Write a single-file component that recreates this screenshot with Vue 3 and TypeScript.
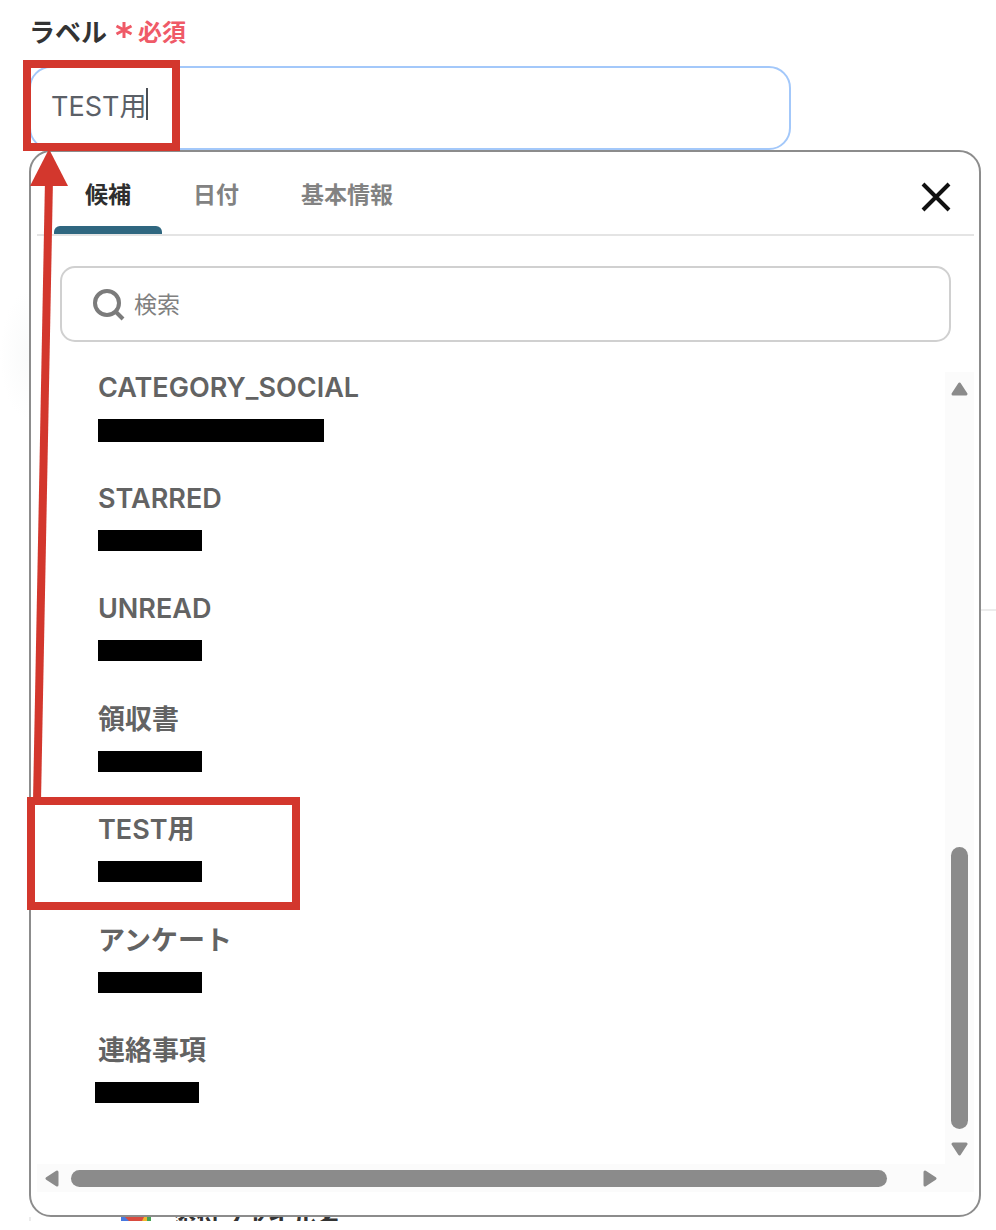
<script setup lang="ts">
import { ref } from 'vue'

interface Candidate {
  name: string
  size: 'wide' | 'normal'
  marked?: boolean
  shifted?: boolean
}

const label = ref('TEST用')
const keyword = ref('')
const activeTab = ref('候補')
const tabs: string[] = ['候補', '日付', '基本情報']

const candidates: Candidate[] = [
  { name: 'CATEGORY_SOCIAL', size: 'wide' },
  { name: 'STARRED', size: 'normal' },
  { name: 'UNREAD', size: 'normal' },
  { name: '領収書', size: 'normal' },
  { name: 'TEST用', size: 'normal', marked: true },
  { name: 'アンケート', size: 'normal' },
  { name: '連絡事項', size: 'normal', shifted: true },
]
</script>

<template>
  <main class="page">
    <span class="glow" aria-hidden="true"></span>
    <div class="label-row">
      <label for="label-input">ラベル</label>
      <span class="required">
        <svg viewBox="0 0 18 18" width="18" height="18" aria-hidden="true">
          <path d="M9 1v16M1.5 5l15 8M16.5 5l-15 8" fill="none" stroke="#ef5a67" stroke-width="3" />
        </svg>
        必須
      </span>
    </div>

    <div class="field">
      <div class="field-box">
        <input id="label-input" v-model="label" type="text" autocomplete="off" />
        <span class="caret" aria-hidden="true"></span>
      </div>
      <span class="mark mark-field" aria-hidden="true"></span>
    </div>

    <section class="popup">
      <header class="head">
        <nav class="tabs" role="tablist">
          <button
            v-for="tab in tabs"
            :key="tab"
            type="button"
            role="tab"
            class="tab"
            :class="{ active: tab === activeTab }"
            :aria-selected="tab === activeTab"
            @click="activeTab = tab"
          >
            {{ tab }}
          </button>
        </nav>
        <button type="button" class="close" aria-label="閉じる">
          <svg viewBox="0 0 30 30" width="30" height="30" aria-hidden="true">
            <path d="M2 2l26 26M28 2L2 28" fill="none" stroke="#111" stroke-width="4" />
          </svg>
        </button>
      </header>

      <div class="search">
        <svg viewBox="0 0 32 32" width="32" height="32" aria-hidden="true">
          <circle cx="14" cy="14" r="12" fill="none" stroke="#7b7b7b" stroke-width="4" />
          <path d="M22.500 22.500L30 30" fill="none" stroke="#7b7b7b" stroke-width="4" />
        </svg>
        <input v-model="keyword" type="text" placeholder="検索" aria-label="検索" />
      </div>

      <div class="scroller">
        <ul class="list">
          <li v-for="item in candidates" :key="item.name" class="item">
            <button type="button" class="choice">
              <span class="name">{{ item.name }}</span>
              <span class="masked" :class="[item.size, { shifted: item.shifted }]"></span>
            </button>
            <span v-if="item.marked" class="mark mark-item" aria-hidden="true"></span>
          </li>
        </ul>
        <div class="rail vertical" aria-hidden="true">
          <svg viewBox="0 0 17 14" width="17" height="14">
            <path d="M8.500 2L15 12H2z" fill="#8b8b8b" stroke="#8b8b8b" stroke-width="3" stroke-linejoin="round" />
          </svg>
          <span class="space"></span>
          <span class="thumb"></span>
          <svg viewBox="0 0 17 14" width="17" height="14">
            <path d="M8.500 12L15 2H2z" fill="#8b8b8b" stroke="#8b8b8b" stroke-width="3" stroke-linejoin="round" />
          </svg>
        </div>
        <div class="rail horizontal" aria-hidden="true">
          <svg viewBox="0 0 14 17" width="14" height="17">
            <path d="M2 8.500L12 2V15z" fill="#8b8b8b" stroke="#8b8b8b" stroke-width="3" stroke-linejoin="round" />
          </svg>
          <span class="thumb"></span>
          <svg viewBox="0 0 14 17" width="14" height="17">
            <path d="M12 8.500L2 2V15z" fill="#8b8b8b" stroke="#8b8b8b" stroke-width="3" stroke-linejoin="round" />
          </svg>
        </div>
      </div>

      <svg class="arrow" viewBox="0 0 40 652" width="40" height="652" aria-hidden="true">
        <path d="M20 30L8 652" fill="none" stroke="#d3372d" stroke-width="8" />
        <path d="M20 0L39 37H1z" fill="#d3372d" />
      </svg>
      <span class="rule" aria-hidden="true"></span>
    </section>

    <div class="behind">
      <svg viewBox="0 0 30 4" width="30" height="4" aria-hidden="true">
        <rect width="30" height="4" fill="#d94b3f" />
        <path d="M0 0h4l4 4H0z" fill="#4778e0" />
        <path d="M24 0h6v4h-8z" fill="#43a352" />
        <path d="M23 0h3v4h-5z" fill="#f2b52e" />
      </svg>
      <span>添付ファイル名</span>
    </div>
  </main>
</template>

<style>
body {
  margin: 0;
  background: #fff;
}
</style>

<style scoped>
* {
  box-sizing: border-box;
}

.page {
  position: relative;
  padding: 12px 15px 0 29px;
  overflow: hidden;
  font-family: Inter, 'Noto Sans CJK JP', sans-serif;
  color: #636363;
}

button,
input {
  padding: 0;
  border: 0;
  background: none;
  font-family: inherit;
  color: inherit;
}

.glow {
  position: absolute;
  top: 290px;
  left: 0;
  width: 29px;
  height: 130px;
  background: radial-gradient(ellipse at right, #f9fafa, #fff 70%);
}

.label-row {
  display: flex;
  align-items: center;
  gap: 8px;
  height: 36px;
  margin-bottom: 18px;
  font-size: 26px;
  font-weight: 700;
  color: #333;
}

.required {
  display: flex;
  align-items: center;
  gap: 5px;
  font-size: 24px;
  color: #ef5a67;
}

.field {
  position: relative;
  z-index: 2;
}

.field-box {
  display: flex;
  align-items: center;
  width: 80%;
  height: 84px;
  padding: 0 20px 8px;
  border: 2px solid #a3c8fa;
  border-radius: 22px;
}

.field-box input {
  field-sizing: content;
  height: 40px;
  outline: 0;
  font-size: 27px;
  color: #5b6067;
}

.caret {
  width: 2px;
  height: 32px;
  background: #4c5056;
}

.mark {
  position: absolute;
  border: 8px solid #d3372d;
  pointer-events: none;
}

.mark-field {
  top: -6px;
  left: -6px;
  width: 157px;
  height: 91px;
}

.popup {
  position: relative;
  padding: 0 5px 23px 6px;
  border: 2px solid #8c8c8c;
  border-radius: 22px;
  background: #fff;
}

.head {
  display: flex;
  justify-content: space-between;
  padding: 0 23px 0 17px;
  border-bottom: 2px solid #e4e4e4;
}

.tabs {
  display: flex;
}

.tab {
  position: relative;
  height: 82px;
  padding: 4px 31px 0;
  font-size: 23px;
  font-weight: 700;
  line-height: 34px;
  color: #828282;
}

.tab.active {
  color: #2e2e2e;
}

.tab.active::after {
  content: '';
  position: absolute;
  right: 0;
  bottom: 0;
  left: 0;
  height: 8px;
  border-radius: 6px 6px 0 0;
  background: #2f6780;
}

.close {
  display: flex;
  align-items: center;
  padding-top: 8px;
}

.search {
  display: flex;
  align-items: center;
  gap: 9px;
  height: 76px;
  margin: 30px 23px;
  padding: 2px 31px 0;
  border: 2px solid #d0d0d0;
  border-radius: 15px;
}

.search input {
  flex: 1;
  height: 40px;
  outline: 0;
  font-size: 23px;
}

.search input::placeholder {
  color: #808080;
  opacity: 1;
}

.scroller {
  display: grid;
  grid-template-columns: 1fr 29px;
}

.list {
  display: grid;
  grid-auto-rows: 1fr;
  min-height: 774px;
  margin: 0 0 18px;
  padding: 0;
  list-style: none;
}

.item {
  position: relative;
}

.choice {
  display: flex;
  flex-direction: column;
  align-items: flex-start;
  gap: 15px;
  width: 100%;
  padding-left: 61px;
  text-align: left;
}

.name {
  font-size: 27px;
  font-weight: 600;
  line-height: 32px;
}

.masked {
  width: 104px;
  height: 21px;
  background: #000;
}

.masked.wide {
  width: 226px;
  height: 23px;
}

.masked.shifted {
  margin-left: -3px;
}

.mark-item {
  top: -17px;
  left: -10px;
  width: 273px;
  height: 113px;
}

.rail {
  display: flex;
  align-items: center;
  background: #fbfbfb;
}

.rail svg {
  flex: none;
}

.thumb {
  border-radius: 9px;
  background: #8b8b8b;
}

.vertical {
  flex-direction: column;
  padding: 10px 0 8px;
}

.vertical .space {
  flex: 451;
}

.vertical .thumb {
  flex: 282;
  width: 17px;
  margin-bottom: 13px;
}

.horizontal {
  grid-column: 1 / -1;
  height: 28px;
  padding: 0 37px 0 8px;
}

.horizontal .thumb {
  flex: 1;
  height: 17px;
  margin: 0 36px 0 12px;
}

.arrow {
  position: absolute;
  top: -3px;
  left: -2px;
  pointer-events: none;
}

.rule {
  position: absolute;
  top: 457px;
  left: calc(100% + 2px);
  width: 15px;
  height: 2px;
  background: #ececec;
}

.behind {
  display: flex;
  gap: 21px;
  height: 4px;
  padding-left: 90px;
  border-left: 2px solid #ececec;
  overflow: hidden;
  font-size: 24px;
  font-weight: 700;
  line-height: 4px;
  color: #333;
}
</style>
